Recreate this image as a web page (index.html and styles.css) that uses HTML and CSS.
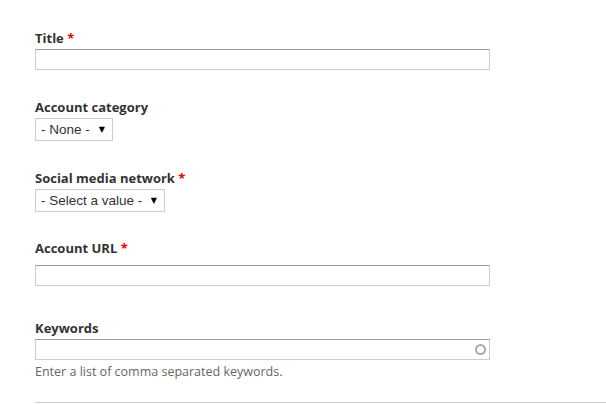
FILE: index.html
```html
<!DOCTYPE html>
<html>
<head>
<meta charset="utf-8">
<link rel="stylesheet" href="styles.css">
</head>
<body>
<form class="form">
  <div class="item item-title">
    <label class="label">Title <span class="req">*</span></label>
    <input class="text" type="text">
  </div>
  <div class="item item-cat">
    <label class="label">Account category</label>
    <div class="select-wrap">
      <select class="select select-none"><option>- None -</option></select>
      <span class="arrow">&#9660;</span>
    </div>
  </div>
  <div class="item item-net">
    <label class="label">Social media network <span class="req">*</span></label>
    <div class="select-wrap">
      <select class="select select-value"><option>- Select a value -</option></select>
      <span class="arrow">&#9660;</span>
    </div>
  </div>
  <div class="item item-url">
    <label class="label label-url">Account URL <span class="req">*</span></label>
    <input class="text" type="text">
  </div>
  <div class="item item-kw">
    <label class="label">Keywords</label>
    <div class="auto-wrap">
      <input class="text" type="text">
      <span class="throbber"></span>
    </div>
    <div class="desc">Enter a list of comma separated keywords.</div>
  </div>
  <div class="rule"></div>
</form>
</body>
</html>
```
FILE: styles.css
```css
html, body {
  margin: 0;
  padding: 0;
  background: #fff;
}
body {
  font-family: "Open Sans", "DejaVu Sans", sans-serif;
  color: #333;
}
.form {
  padding: 29px 0 0 35px;
}
.item {
  margin-bottom: 28px;
}
.label {
  display: block;
  font-size: 13px;
  font-weight: bold;
  line-height: 18px;
  margin-bottom: 2px;
  color: #333;
}
.req {
  color: #e00;
}
.text {
  display: block;
  box-sizing: border-box;
  width: 455px;
  height: 21px;
  margin: 0;
  padding: 0 4px;
  border: 1px solid #ccc;
  border-top-color: #999;
  background: #fff;
  font-family: "Liberation Sans", Arial, sans-serif;
  font-size: 13px;
  outline: none;
}
.select-wrap {
  position: relative;
  display: block;
  width: max-content;
}
.select {
  -webkit-appearance: none;
  appearance: none;
  box-sizing: border-box;
  height: 23px;
  margin: 0;
  padding: 0 0 0 5px;
  border: 1px solid #ccc;
  border-radius: 0;
  background: #fff;
  font-family: "Liberation Sans", Arial, sans-serif;
  font-size: 13.5px;
  color: #333;
  display: block;
}
.select-none {
  width: 78px;
}
.select-value {
  width: 130px;
}
.arrow {
  position: absolute;
  right: 8px;
  top: 7px;
  font-size: 8px;
  line-height: 9px;
  color: #000;
  font-family: "DejaVu Sans", sans-serif;
  pointer-events: none;
}
.item-net {
  margin-bottom: 27px;
}
.label-url {
  margin-bottom: 8px;
}
.item-url {
  margin-bottom: 33px;
}
.auto-wrap {
  position: relative;
  width: 455px;
}
.throbber {
  position: absolute;
  right: 4px;
  top: 5px;
  width: 7px;
  height: 7px;
  border: 2px solid #aaa;
  border-radius: 50%;
}
.desc {
  margin-top: 3px;
  font-size: 12.5px;
  line-height: 18px;
  color: #666;
}
.item-kw {
  margin-bottom: 21px;
}
.rule {
  border-top: 1px solid #ccc;
}
```
